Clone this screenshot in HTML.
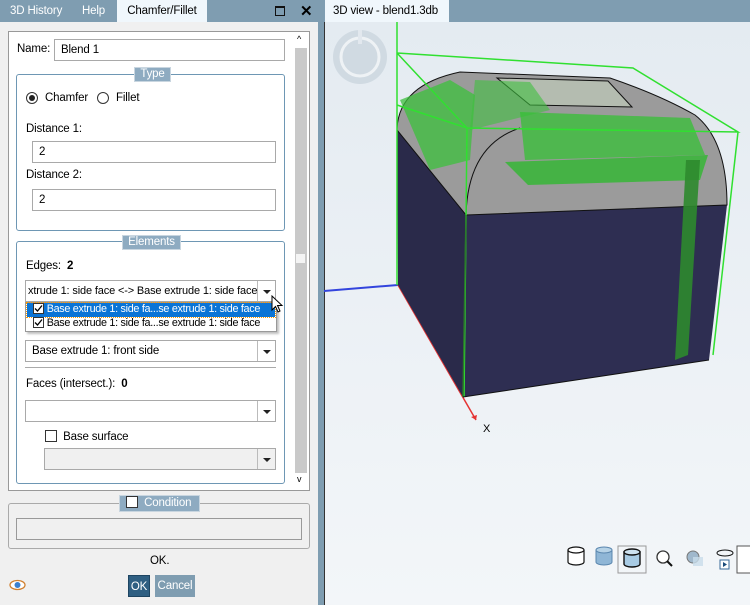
<!DOCTYPE html>
<html><head><meta charset="utf-8"><style>
*{box-sizing:border-box;margin:0;padding:0}
body{width:750px;height:605px;overflow:hidden;font-family:"Liberation Sans",sans-serif;font-size:11.5px;letter-spacing:-0.15px;color:#000;background:#f0f0f0;position:relative}
.a{position:absolute}
.tabbar{left:0;top:0;width:750px;height:22px;background:#7f9db1}
.tab{top:0;height:22px;line-height:22px;color:#fff}
.inp{position:absolute;background:#fff;border:1px solid #a9a9a9;height:22px;line-height:20px;padding-left:6px}
.grp{position:absolute;border:1px solid #6e97b4;border-radius:3px;background:#fff}
.gt{position:absolute;background:#8eabc1;color:#fff;border:1px solid #c9d6e0;height:15px;line-height:13px;text-align:center}
.dd{position:absolute;right:0;top:0;width:18px;height:20px;border-left:1px solid #bbb;background:inherit}
.dd:after{content:"";position:absolute;left:5px;top:9px;border-left:4px solid transparent;border-right:4px solid transparent;border-top:4px solid #222}
.cb{display:inline-block;width:12px;height:12px;border:1px solid #333;background:#fff;vertical-align:-2px;position:relative}
</style></head><body>
<div class="a tabbar"></div>
<div class="a tab" style="left:10px">3D History</div>
<div class="a tab" style="left:82px">Help</div>
<div class="a tab" style="left:117px;width:90px;background:#f0f7fc;color:#000;text-align:center">Chamfer/Fillet</div>
<div class="a" style="left:275px;top:6px;width:10px;height:10px;border:1.5px solid #111;border-top-width:2.5px"></div>
<div class="a" style="left:300px;top:2px;font-size:15px;font-weight:bold">✕</div>
<div class="a" style="left:318px;top:0;width:6px;height:605px;background:#7f9db1"></div>
<div class="a" style="left:325px;top:0;width:124px;height:22px;background:#f0f7fc;line-height:22px;padding-left:8px">3D view - blend1.3db</div>

<div class="a" style="left:8px;top:31px;width:302px;height:460px;background:#fff;border:1px solid #999"></div>
<div class="a" style="left:295px;top:48px;width:12px;height:425px;background:#c9c9c9"></div>
<div class="a" style="left:296px;top:254px;width:9px;height:9px;background:#f4f4f4"></div>
<div class="a" style="left:297px;top:34px;font-size:9px">^</div>
<div class="a" style="left:297px;top:474px;font-size:9px">v</div>

<div class="a" style="left:17px;top:43px">Name:</div>
<div class="inp" style="left:54px;top:39px;width:231px">Blend 1</div>

<div class="grp" style="left:16px;top:74px;width:269px;height:157px"></div>
<div class="gt" style="left:134px;top:67px;width:37px">Type</div>
<div class="a" style="left:26px;top:92px;width:12px;height:12px;border:1px solid #333;border-radius:50%"><div style="margin:2px;width:6px;height:6px;border-radius:50%;background:#222"></div></div>
<div class="a" style="left:45px;top:92px">Chamfer</div>
<div class="a" style="left:97px;top:92px;width:12px;height:12px;border:1px solid #333;border-radius:50%"></div>
<div class="a" style="left:116px;top:92px">Fillet</div>
<div class="a" style="left:26px;top:123px">Distance 1:</div>
<div class="inp" style="left:32px;top:141px;width:244px">2</div>
<div class="a" style="left:26px;top:169px">Distance 2:</div>
<div class="inp" style="left:32px;top:189px;width:244px">2</div>

<div class="grp" style="left:16px;top:241px;width:269px;height:243px"></div>
<div class="gt" style="left:122px;top:235px;width:59px">Elements</div>
<div class="a" style="left:26px;top:260px">Edges:&nbsp; <b>2</b></div>
<div class="inp" style="left:25px;top:280px;width:251px;padding-left:2px;overflow:hidden;white-space:nowrap;font-size:11px">xtrude 1: side face &lt;-&gt; Base extrude 1: side face<div class="dd" style="background:#fff"></div></div>
<div class="a" style="left:25px;top:302px;width:252px;height:30px;background:#fff;border:1px solid #999;box-shadow:2px 2px 2px rgba(0,0,0,.25)"></div>
<div class="a" style="left:27px;top:303px;width:248px;height:14px;background:#0a74d6;outline:1px dotted #f90"></div>
<div class="a" style="left:33px;top:303px;color:#fff;font-size:10.8px;letter-spacing:-0.3px;white-space:nowrap"><span class="cb" style="width:11px;height:11px"><svg width="9" height="9" style="position:absolute;left:0;top:0"><path d="M1 4.5L3.5 7 8 1.5" stroke="#000" fill="none" stroke-width="1.3"/></svg></span> Base extrude 1: side fa...se extrude 1: side face</div>
<div class="a" style="left:33px;top:317px;font-size:10.8px;letter-spacing:-0.3px;white-space:nowrap"><span class="cb" style="width:11px;height:11px"><svg width="9" height="9" style="position:absolute;left:0;top:0"><path d="M1 4.5L3.5 7 8 1.5" stroke="#000" fill="none" stroke-width="1.3"/></svg></span> Base extrude 1: side fa...se extrude 1: side face</div>
<svg class="a" style="left:271px;top:295px" width="14" height="20"><path d="M1 1L1 15 4.5 11.5 7 17 9 16 6.5 10.5 11 10.5Z" fill="#fff" stroke="#000"/></svg>
<div class="inp" style="left:25px;top:340px;width:251px">Base extrude 1: front side<div class="dd" style="background:#fff"></div></div>
<div class="a" style="left:25px;top:367px;width:251px;height:1px;background:#aaa"></div>
<div class="a" style="left:26px;top:378px">Faces (intersect.):&nbsp; <b>0</b></div>
<div class="inp" style="left:25px;top:400px;width:251px"><div class="dd" style="background:#fff"></div></div>
<div class="a" style="left:45px;top:430px"><span class="cb"></span>&nbsp; Base surface</div>
<div class="inp" style="left:44px;top:448px;width:232px;background:#f0f0f0"><div class="dd" style="background:#f0f0f0"></div></div>

<div class="a" style="left:8px;top:503px;width:302px;height:46px;border:1px solid #aaa;border-radius:3px;background:#f0f0f0"></div>
<div class="gt" style="left:119px;top:495px;width:81px;height:17px;text-align:left;padding-left:6px;line-height:15px"><span class="cb" style="vertical-align:-2px"></span>&nbsp; Condition</div>
<div class="a" style="left:16px;top:518px;width:286px;height:22px;border:1px solid #999;background:#f0f0f0"></div>
<div class="a" style="left:150px;top:555px">OK.</div>
<div class="a" style="left:128px;top:575px;width:22px;height:22px;background:#2f5f82;color:#fff;text-align:center;line-height:22px;border:1px solid #1e4562">OK</div>
<div class="a" style="left:155px;top:575px;width:40px;height:22px;background:#7f9db1;color:#fff;text-align:center;line-height:22px">Cancel</div>
<svg class="a" style="left:9px;top:579px" width="17" height="12"><ellipse cx="8.5" cy="6" rx="7.5" ry="4.5" fill="#fff" stroke="#d08030" stroke-width="1.3"/><circle cx="8.5" cy="6" r="3" fill="#3a80d0"/></svg>

<div class="a" style="left:324px;top:22px;width:426px;height:583px;background:linear-gradient(#e4ebf1,#f3f6f9);border-left:1px solid #333"></div>
<svg class="a" style="left:324px;top:22px" width="426" height="583" viewBox="324 22 426 583">
<circle cx="360" cy="57" r="27" fill="#d0dae2"/><circle cx="360" cy="57" r="19" fill="none" stroke="#eef2f5" stroke-width="3"/>
<rect x="358" y="30" width="4" height="14" fill="#e2e8ee"/>
<line x1="324" y1="291" x2="398" y2="285" stroke="#3344dd" stroke-width="2"/>
<line x1="398" y1="285" x2="476" y2="420" stroke="#e53333" stroke-width="1.5"/>
<path d="M476 420l-5 -3 6 -2z" fill="#e53333"/>
<text x="483" y="432" font-family="Liberation Sans" font-size="11">X</text>
<path d="M397 130L466 215 463 397 398 285Z" fill="#2a2a4a"/>
<path d="M466 215L727 205 709 360 463 397Z" fill="#2e2e52"/>
<path d="M397 130 Q398 85 460 72 L610 78 Q660 95 695 115 Q727 140 727 205 L466 215 Z" fill="#9b9b9b"/>
<path d="M497 78L608 81 632 107 530 105Z" fill="#b4bcb0" stroke="#111"/>
<path d="M397 130 Q398 85 460 72 L610 78 Q660 95 695 115 Q727 140 727 205 L466 215 Z" fill="none" stroke="#111"/>
<path d="M466 215 Q468 145 520 128" stroke="#111" fill="none"/>
<path d="M400 100L450 80 475 95 470 160 430 170Z" fill="#3cc03c" opacity=".75"/>
<path d="M475 80L530 82 550 110 470 130Z" fill="#40c040" opacity=".6"/>
<path d="M520 112L690 118 705 155 525 160Z" fill="#35c035" opacity=".75"/>
<path d="M505 162L708 155 700 180 528 185Z" fill="#2fb82f" opacity=".8"/>
<path d="M686 160L700 160 688 355 675 360Z" fill="#2e8a2e" opacity=".9"/>
<path d="M397 22L397 285M397 53L633 68 738 132 467 128 397 53M397 105L467 128M467 128L464 397M738 132L713 355" stroke="#30e030" stroke-width="1.5" fill="none"/>
<line x1="466" y1="215" x2="463" y2="397" stroke="#2a7a2a" stroke-width="1.5"/>
<path d="M463 397L709 360" stroke="#111"/>
</svg>
<svg class="a" style="left:560px;top:545px" width="190" height="30">
<g stroke="#111" fill="#fff" stroke-width="1.2"><path d="M8 5v12a8 3 0 0 0 16 0V5"/><ellipse cx="16" cy="5" rx="8" ry="3"/></g>
<g stroke="#5a86ae" stroke-width="1"><path d="M36 5v12a8 3 0 0 0 16 0V5z" fill="#8fb6d6"/><ellipse cx="44" cy="5" rx="8" ry="3" fill="#b6d2e6"/></g>
<rect x="58" y="1" width="28" height="27" fill="none" stroke="#999"/>
<g stroke="#111" stroke-width="1.4"><path d="M64 7v12a8 3 0 0 0 16 0V7z" fill="#a8cbe4"/><ellipse cx="72" cy="7" rx="8" ry="3" fill="#cde2f0"/></g>
<circle cx="103" cy="12" r="6" fill="#fff" stroke="#333" stroke-width="1.3"/><line x1="107" y1="16" x2="112" y2="21" stroke="#111" stroke-width="2"/>
<circle cx="133" cy="12" r="6" fill="#a0b8cc" stroke="#777"/><rect x="133" y="12" width="10" height="9" fill="#c8dcea" opacity=".8"/>
<ellipse cx="165" cy="8" rx="8" ry="3" fill="none" stroke="#111"/><rect x="160" y="15" width="9" height="9" fill="#fff" stroke="#3a6a9a"/><path d="M163 17l4 2.5-4 2.5z" fill="#1a4a7a"/>
<rect x="177" y="1" width="14" height="27" fill="#fff" stroke="#555"/>
</svg>
</body></html>
